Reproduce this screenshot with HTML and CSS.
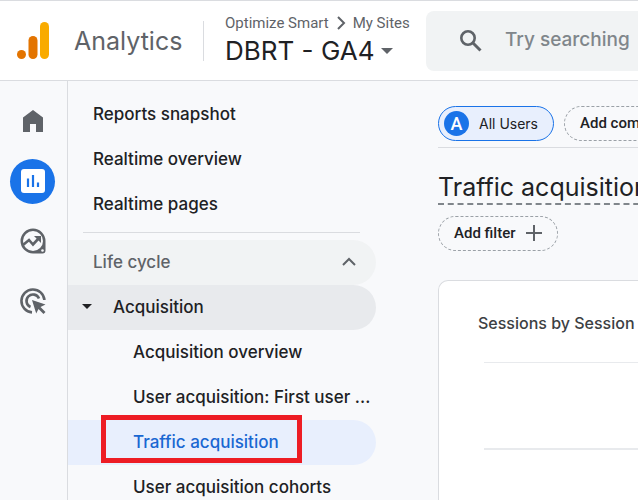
FILE: index.html
```html
<!DOCTYPE html>
<html lang="en">
<head>
<meta charset="utf-8">
<title>Analytics</title>
<link rel="stylesheet" href="styles.css">
</head>
<body>
<!-- header -->
<header class="header">
  <a class="brand" href="#">
    <svg class="logo" width="32" height="37" viewBox="0 0 32 37">
      <rect x="23" y="0" width="9" height="37" rx="4.5" fill="#f9ab00"/>
      <rect x="11.500" y="14" width="9" height="23" rx="4.500" fill="#e37400"/>
      <circle cx="4.500" cy="32.500" r="4.500" fill="#e37400"/>
    </svg>
    <span class="brand_name">Analytics</span>
  </a>
  <div class="account">
    <div class="crumbs">
      <span>Optimize Smart</span>
      <svg width="10" height="14" viewBox="0 0 10 14"><path d="M2 1l6 6-6 6" fill="none" stroke="#5f6368" stroke-width="2"/></svg>
      <span>My Sites</span>
    </div>
    <button class="property" type="button">DBRT - GA4
      <svg width="12" height="6" viewBox="0 0 12 6"><path d="M0 0h12L6 6z" fill="#5f6368"/></svg>
    </button>
  </div>
  <label class="search">
    <svg width="24" height="24" viewBox="0 0 24 24"><circle cx="9" cy="9" r="6.700" fill="none" stroke="#5f6368" stroke-width="2.600"/><path d="M13.500 13.500l8 8" stroke="#5f6368" stroke-width="3"/></svg>
    <input type="text" placeholder="Try searching" aria-label="Search">
  </label>
</header>

<div class="page">
  <!-- icon rail -->
  <nav class="rail" aria-label="Sections">
    <a class="rail_link" href="#" aria-label="Home">
      <svg width="20" height="22" viewBox="0 0 20 22"><path d="M0 22V7.500L10 0l10 7.500V22h-7v-8H7v8z" fill="#5f6368"/></svg>
    </a>
    <a class="rail_link rail_active" href="#" aria-label="Reports">
      <svg width="24" height="24" viewBox="0 0 24 24"><rect x="0" y="0" width="24" height="24" rx="3" fill="#fff"/><path d="M7 9.500v8.500M12 6v12M17 13.500V18" stroke="#1a73e8" stroke-width="2.200"/></svg>
    </a>
    <a class="rail_link" href="#" aria-label="Explore">
      <svg width="26" height="26" viewBox="0 0 26 26"><path d="M13 1.500a11.500 11.500 0 1 0 0 23h9.500a2 2 0 0 0 2-2V13A11.500 11.500 0 0 0 13 1.500z" fill="#5f6368" stroke="#5f6368" stroke-width="2"/><circle cx="13" cy="13" r="10" fill="#f8f9fb"/><circle cx="22.500" cy="22.500" r="1.300" fill="#f8f9fb"/><path d="M3 17l6-5 4 4.500 6-6.500" fill="none" stroke="#5f6368" stroke-width="2.600"/><path d="M14 8h7v7z" fill="#5f6368"/></svg>
    </a>
    <a class="rail_link" href="#" aria-label="Advertising">
      <svg width="26" height="26" viewBox="0 0 26 26"><path d="M12 24.400A11.500 11.500 0 1 1 24.400 12" fill="none" stroke="#5f6368" stroke-width="2.600"/><path d="M10.500 19A6.500 6.500 0 1 1 19 10.500" fill="none" stroke="#5f6368" stroke-width="2.600"/><path d="M12 12l13.500 4.500-5 2.500 5 5-2 2-5-5-2.300 4.500z" fill="#5f6368"/></svg>
    </a>
  </nav>

  <!-- report menu -->
  <nav class="menu" aria-label="Reports">
    <a class="item" href="#">Reports snapshot</a>
    <a class="item" href="#">Realtime overview</a>
    <a class="item" href="#">Realtime pages</a>
    <hr class="menu_line">
    <button class="item group" type="button">Life cycle
      <svg width="14" height="9" viewBox="0 0 14 9"><path d="M1 8l6-6 6 6" fill="none" stroke="#5f6368" stroke-width="2"/></svg>
    </button>
    <button class="item topic" type="button">
      <svg width="10" height="5" viewBox="0 0 10 5"><path d="M0 0h10L5 5z" fill="#202124"/></svg>
      Acquisition
    </button>
    <a class="item sub" href="#">Acquisition overview</a>
    <a class="item sub" href="#">User acquisition: First user ...</a>
    <a class="item sub selected" href="#">Traffic acquisition</a>
    <a class="item sub" href="#">User acquisition cohorts</a>
  </nav>

  <!-- report -->
  <main class="report">
    <div class="segments">
      <button class="chip all_users" type="button"><span class="badge">A</span>All Users</button>
      <button class="chip dashed" type="button">Add comparison</button>
    </div>
    <h1 class="title">Traffic acquisition</h1>
    <button class="chip dashed" type="button">Add filter
      <svg width="16" height="16" viewBox="0 0 16 16"><path d="M8 0v16M0 8h16" stroke="#5f6368" stroke-width="2"/></svg>
    </button>
    <section class="card">
      <h2 class="card_title">Sessions by Session</h2>
      <div class="chart">
        <div class="grid_line"></div>
        <div class="grid_line thick"></div>
      </div>
    </section>
  </main>
</div>
</body>
</html>
```
FILE: styles.css
```css
* {
  box-sizing: border-box;
}
body {
  margin: 0;
  height: 100vh;
  display: flex;
  flex-direction: column;
  overflow: hidden;
  background: #f8f9fb;
  color: #202124;
  font-family: Inter, "Liberation Sans", sans-serif;
  white-space: nowrap;
}
a {
  color: inherit;
  text-decoration: none;
}
button {
  border: 0;
  padding: 0;
  background: none;
  color: inherit;
  font: inherit;
  text-align: left;
}
svg {
  display: block;
  flex: none;
}

/* header */
.header {
  flex: none;
  display: flex;
  align-items: center;
  height: 81px;
  padding-left: 17px;
  background: #fff;
  border-top: 1px solid #dadce0;
  border-bottom: 1px solid #dadce0;
}
.brand {
  flex: none;
  display: flex;
  align-items: center;
  gap: 25px;
  width: 187px;
  height: 40px;
  border-right: 1px solid #dadce0;
}
.brand_name {
  color: #5f6368;
  font-size: 25px;
}
.account {
  flex: none;
  width: 222px;
  padding-left: 21px;
}
.crumbs {
  display: flex;
  align-items: center;
  gap: 7px;
  color: #5f6368;
  font: 15px/20px Roboto, sans-serif;
}
.property {
  display: flex;
  align-items: center;
  gap: 7px;
  font-size: 26px;
  line-height: 35px;
}
.search {
  flex: 1;
  min-width: 0;
  display: flex;
  align-items: center;
  gap: 22px;
  height: 60px;
  padding-left: 33px;
  background: #f1f3f4;
  border-radius: 8px 0 0 8px;
}
.search input {
  flex: 1;
  min-width: 0;
  border: 0;
  padding: 0 0 2px;
  outline: 0;
  background: none;
  font: 500 19px Inter, sans-serif;
}
.search input::placeholder {
  color: #80868b;
}

.page {
  flex: 1;
  min-height: 0;
  display: flex;
}

/* icon rail */
.rail {
  flex: none;
  display: flex;
  flex-direction: column;
  align-items: center;
  gap: 15px;
  width: 68px;
  padding: 18px 2px 0 0;
  border-right: 1px solid #dadce0;
}
.rail_link {
  display: flex;
  align-items: center;
  justify-content: center;
  width: 45px;
  height: 45px;
  padding-bottom: 2px;
  border-radius: 50%;
}
.rail_active {
  background: #1a73e8;
}

/* report menu */
.menu {
  flex: none;
  width: 308px;
  padding-top: 11px;
}
.item {
  display: flex;
  align-items: center;
  width: 100%;
  height: 45px;
  padding: 0 0 2px 25px;
  border-radius: 0 23px 23px 0;
  font-size: 17px;
  font-weight: 500;
}
.menu_line {
  height: 1px;
  margin: 5px 16px 7px 15px;
  border: 0;
  background: #dadce0;
}
.group {
  justify-content: space-between;
  padding-right: 20px;
  background: #f1f3f4;
  color: #5f6368;
}
.topic {
  gap: 21px;
  padding-left: 14px;
  background: #e8eaed;
}
.sub {
  padding-left: 65px;
}
.selected {
  position: relative;
  background: #e8effd;
  color: #1967d2;
}
/* red frame over the selected entry */
.selected::after {
  content: "";
  position: absolute;
  box-sizing: border-box;
  left: 33px;
  top: -5px;
  width: 201px;
  height: 48px;
  border: 5px solid #ed1c24;
}

/* report */
.report {
  flex: 1;
  min-width: 0;
  display: flex;
  flex-direction: column;
  align-items: flex-start;
  margin-left: 62px;
  overflow: hidden;
}
.segments {
  display: flex;
  gap: 10px;
  width: 100%;
  padding: 25px 0 6px;
  border-bottom: 1px solid #dadce0;
}
.chip {
  flex: none;
  display: flex;
  align-items: center;
  gap: 10px;
  height: 35px;
  padding: 0 15px 2px;
  border-radius: 18px;
  font: 500 15px Roboto, sans-serif;
}
.dashed {
  border: 1px dashed #9aa0a6;
}
.all_users {
  padding: 0 15px 0 5px;
  border: 1px solid #1a73e8;
  background: #e8effd;
  font: 14px Inter, sans-serif;
}
.badge {
  width: 25px;
  border-radius: 50%;
  background: #1a73e8;
  color: #fff;
  font: 500 18px/25px Roboto, sans-serif;
  text-align: center;
}
.title {
  margin: 19px 0 11px;
  padding-top: 4px;
  border-bottom: 2px dashed #80868b;
  font-size: 25px;
  font-weight: 400;
  line-height: 32px;
}
.card {
  flex: 1;
  width: 100%;
  margin-top: 29px;
  padding: 30px 0 0 39px;
  border: 1px solid #dadce0;
  border-width: 1px 0 0 1px;
  border-radius: 10px 0 0 0;
  background: #fff;
}
.card_title {
  margin: 0;
  color: #3c4043;
  font-size: 16px;
  font-weight: 500;
  line-height: 24px;
}
.chart {
  display: flex;
  flex-direction: column;
  gap: 85px;
  padding: 27px 0 0 6px;
}
.grid_line {
  height: 1px;
  background: #e8eaed;
}
.thick {
  height: 2px;
}
```
